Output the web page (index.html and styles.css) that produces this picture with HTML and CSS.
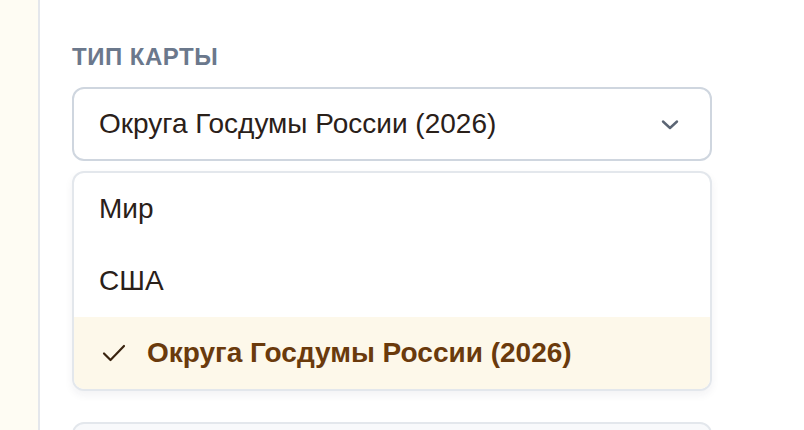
FILE: index.html
```html
<!DOCTYPE html>
<html lang="ru">
<head>
  <meta charset="UTF-8" />
  <title>Тип карты</title>
  <link rel="stylesheet" href="styles.css">
</head>
<body>
  <div class="rail"></div>

  <div class="panel">
    <div class="field">
      <label class="field-label" for="mapType">Тип карты</label>

      <button type="button" class="select" id="mapType" aria-expanded="true">
        <span class="select-value">Округа Госдумы России (2026)</span>
        <svg class="chevron" width="20" height="12" viewBox="0 0 20 12" aria-hidden="true">
          <path d="M3 2.5 L10 9 L17 2.5" fill="none" stroke="currentColor" stroke-width="2.4" stroke-linecap="round" stroke-linejoin="round"/>
        </svg>
      </button>

      <ul class="options" role="listbox">
        <li class="option" role="option">Мир</li>
        <li class="option" role="option">США</li>
        <li class="option selected" role="option" aria-selected="true">
          <svg class="check" width="26" height="20" viewBox="0 0 26 20" aria-hidden="true">
            <path d="M3 10.5 L9.5 17 L23 3" fill="none" stroke="currentColor" stroke-width="2.2" stroke-linecap="round" stroke-linejoin="round"/>
          </svg>
          Округа Госдумы России (2026)
        </li>
      </ul>
    </div>

    <div class="next-card"></div>
  </div>
</body>
</html>
```

FILE: styles.css
```css
:root {
  --rail-bg: #fefcf3;
  --rail-border: #e4e7ec;
  --text: #2a2019;
  --label: #6b788c;
  --border: #cfd6df;
  --menu-border: #e3e7ec;
  --muted-icon: #5b6574;
  --selected-bg: #fdf8ea;
  --selected-text: #6a3a0c;
}
html, body { margin: 0; padding: 0; }
body {
  display: flex;
  height: 100vh;
  background: #fff;
  color: var(--text);
  font-family: "Liberation Sans", Arial, sans-serif;
  overflow: hidden;
}
.rail {
  width: 38px;
  flex: none;
  background: var(--rail-bg);
  border-right: 2px solid var(--rail-border);
}
.panel {
  flex: 1;
  padding: 42px 92px 0 32px;
  overflow: hidden;
}
.field { display: flex; flex-direction: column; }
.field-label {
  font-size: 24px;
  line-height: 30px;
  font-weight: bold;
  text-transform: uppercase;
  letter-spacing: 0.5px;
  color: var(--label);
  margin-bottom: 15px;
}
.select {
  display: flex;
  align-items: center;
  justify-content: space-between;
  height: 74px;
  padding: 0 30px 0 25px;
  border: 2px solid var(--border);
  border-radius: 12px;
  background: #fff;
  color: var(--text);
  font-family: inherit;
  font-size: 28px;
  text-align: left;
  cursor: pointer;
}
.chevron { color: var(--muted-icon); margin-top: 1px; }
.options {
  list-style: none;
  margin: 10px 0 0;
  padding: 0;
  border: 2px solid var(--menu-border);
  border-radius: 12px;
  background: #fff;
  box-shadow: 0 4px 8px rgba(30, 40, 60, 0.06);
  overflow: hidden;
}
.option {
  display: flex;
  align-items: center;
  height: 72px;
  padding-left: 25px;
  font-size: 28px;
}
.option.selected {
  background: var(--selected-bg);
  color: var(--selected-text);
  font-weight: bold;
  padding-left: 27px;
  gap: 20px;
}
.check { color: #3a2410; }
.next-card {
  margin-top: 31px;
  height: 40px;
  border: 2px solid var(--menu-border);
  border-radius: 12px;
  background: #f8f9fb;
}
```
